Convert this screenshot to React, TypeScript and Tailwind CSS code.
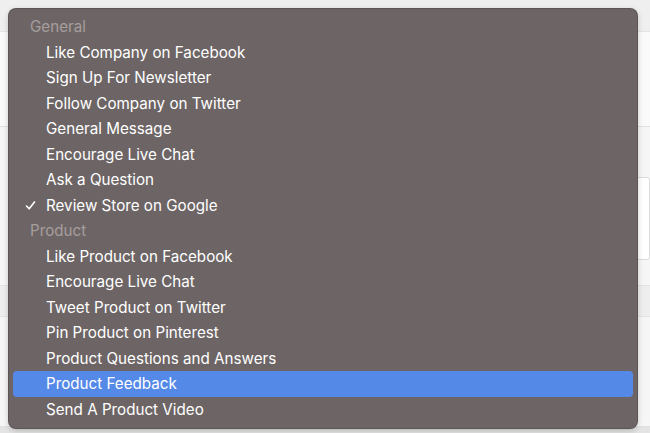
import React from "react";

type Row = { label: string; header?: boolean; checked?: boolean; active?: boolean };

const rows: Row[] = [
  { label: "General", header: true },
  { label: "Like Company on Facebook" },
  { label: "Sign Up For Newsletter" },
  { label: "Follow Company on Twitter" },
  { label: "General Message" },
  { label: "Encourage Live Chat" },
  { label: "Ask a Question" },
  { label: "Review Store on Google", checked: true },
  { label: "Product", header: true },
  { label: "Like Product on Facebook" },
  { label: "Encourage Live Chat" },
  { label: "Tweet Product on Twitter" },
  { label: "Pin Product on Pinterest" },
  { label: "Product Questions and Answers" },
  { label: "Product Feedback", active: true },
  { label: "Send A Product Video" },
];

function Check() {
  return (
    <svg width="11" height="11" viewBox="0 0 11 11" className="text-white">
      <path d="M1.5 6 L4.2 8.8 L9.5 2" fill="none" stroke="currentColor" strokeWidth="1.6" strokeLinecap="round" strokeLinejoin="round" />
    </svg>
  );
}

export default function App() {
  return (
    <div
      className="relative w-[650px] h-[433px] overflow-hidden bg-[#f6f6f6]"
      style={{ fontFamily: "Inter, 'Noto Sans', sans-serif" }}
    >
      {/* page behind the menu */}
      <div className="flex flex-col h-full">
        <div className="h-[32px] bg-[#efefef] border-b border-[#e4e4e4]" />
        <div className="h-[95px] bg-[#fafafa] border-b border-[#e2e2e2]" />
        <div className="h-[50px]" />
        <div className="h-[83px] ml-[600px] bg-white border border-[#dcdcdc] rounded-[3px]" />
        <div className="h-[25px]" />
        <div className="h-[32px] bg-[#eeeeee] border-y border-[#e3e3e3]" />
        <div className="flex-1 border-b border-[#e0e0e0]" />
        <div className="h-[6px] bg-[#e4e4e4]" />
      </div>

      {/* dropdown menu */}
      <div className="absolute left-[9px] top-[9px] w-[628px] h-[419px] rounded-[7px] bg-[#6d6565] shadow-[0_2px_6px_rgba(0,0,0,0.25)] ring-1 ring-[#5c5555] px-[4px] pt-[5px] pb-[3px]">
        {rows.map((r, i) => (
          <div
            key={i}
            className={`flex items-center h-[25.5px] rounded-[4px] text-[15.2px] leading-none ${
              r.active ? "bg-[#5589e8] text-white" : r.header ? "text-[#a59e9e]" : "text-white"
            }`}
          >
            {r.header ? (
              <span className="pl-[17px]">{r.label}</span>
            ) : (
              <>
                <span className="w-[33px] flex justify-center pl-[2px]">{r.checked ? <Check /> : null}</span>
                <span>{r.label}</span>
              </>
            )}
          </div>
        ))}
      </div>
    </div>
  );
}
